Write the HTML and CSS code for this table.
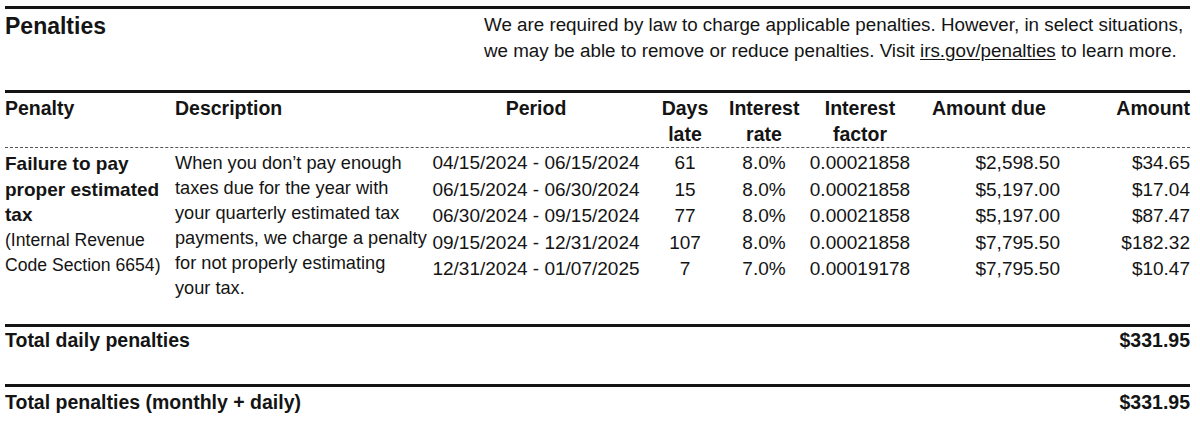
FILE: index.html
```html
<!DOCTYPE html>
<html lang="en">
<head>
<meta charset="utf-8">
<title>Penalties</title>
<link rel="stylesheet" href="styles.css">
</head>
<body>
<div class="page">
  <section class="intro">
    <h1 class="title">Penalties</h1>
    <p class="lead">We are required by law to charge applicable penalties. However, in select situations,<br>we may be able to remove or reduce penalties. Visit <a class="link" href="#">irs.gov/penalties</a> to learn more.</p>
  </section>

  <div class="thead">
    <div class="th c-pen">Penalty</div>
    <div class="th c-desc">Description</div>
    <div class="th c-per center">Period</div>
    <div class="th c-days center">Days<br>late</div>
    <div class="th c-rate center">Interest<br>rate</div>
    <div class="th c-fac center">Interest<br>factor</div>
    <div class="th c-due due-head">Amount due</div>
    <div class="th c-amt right">Amount</div>
  </div>

  <div class="tbody">
    <div class="pen-cell">
      <div class="pen-name">Failure to pay<br>proper estimated<br>tax</div>
      <div class="pen-code">(Internal Revenue<br>Code Section 6654)</div>
    </div>
    <div class="desc-cell">When you don’t pay enough<br>taxes due for the year with<br>your quarterly estimated tax<br>payments, we charge a penalty<br>for not properly estimating<br>your tax.</div>
    <div class="nums">
      <div class="td center">04/15/2024 - 06/15/2024</div><div class="td center">61</div><div class="td center">8.0%</div><div class="td center">0.00021858</div><div class="td right">$2,598.50</div><div class="td right">$34.65</div>
      <div class="td center">06/15/2024 - 06/30/2024</div><div class="td center">15</div><div class="td center">8.0%</div><div class="td center">0.00021858</div><div class="td right">$5,197.00</div><div class="td right">$17.04</div>
      <div class="td center">06/30/2024 - 09/15/2024</div><div class="td center">77</div><div class="td center">8.0%</div><div class="td center">0.00021858</div><div class="td right">$5,197.00</div><div class="td right">$87.47</div>
      <div class="td center">09/15/2024 - 12/31/2024</div><div class="td center">107</div><div class="td center">8.0%</div><div class="td center">0.00021858</div><div class="td right">$7,795.50</div><div class="td right">$182.32</div>
      <div class="td center">12/31/2024 - 01/07/2025</div><div class="td center">7</div><div class="td center">7.0%</div><div class="td center">0.00019178</div><div class="td right">$7,795.50</div><div class="td right">$10.47</div>
    </div>
  </div>

  <div class="total total-daily">
    <span>Total daily penalties</span>
    <span>$331.95</span>
  </div>
  <div class="total total-all">
    <span>Total penalties (monthly + daily)</span>
    <span>$331.95</span>
  </div>
</div>
</body>
</html>
```

FILE: styles.css
```css
html, body {
  margin: 0;
  padding: 0;
  background: #ffffff;
}

body {
  font-family: "Liberation Sans", Arial, sans-serif;
  color: #141414;
  font-size: 18.8px;
}

.page {
  width: 1185px;
  padding: 6px 0 0 5px;
}

.intro {
  display: flex;
  justify-content: space-between;
  align-items: flex-start;
  border-top: 3px solid #141414;
  padding: 3px 0 26px 0;
}

.title {
  margin: 1px 0 0 0;
  font-size: 23px;
  line-height: 26px;
  font-weight: bold;
}

.lead {
  margin: 0;
  width: 706px;
  font-size: 18.8px;
  line-height: 26px;
  white-space: nowrap;
}

.link {
  color: inherit;
  text-decoration: underline;
  text-underline-offset: 2px;
}

.thead {
  display: grid;
  grid-template-columns: 170px 256px 210px 88px 70px 122px 139px 130px;
  border-top: 3px solid #141414;
  border-bottom: 1.5px dashed #555;
  padding-top: 2px;
}

.th {
  font-weight: bold;
  font-size: 19.5px;
  line-height: 26px;
  white-space: nowrap;
}

.center { text-align: center; }
.right { text-align: right; }
.due-head { padding-left: 11px; }

.tbody {
  display: grid;
  grid-template-columns: 170px 256px 759px;
  padding-top: 3px;
}

.pen-cell {
  line-height: 25.5px;
  white-space: nowrap;
}

.pen-name {
  font-weight: bold;
  font-size: 19px;
}

.pen-code {
  font-size: 17.6px;
}

.desc-cell {
  font-size: 18.2px;
  line-height: 25px;
  white-space: nowrap;
}

.nums {
  display: grid;
  grid-template-columns: 210px 88px 70px 122px 139px 130px;
  grid-auto-rows: 26.5px;
  line-height: 26.5px;
  margin-top: -1px;
}

.td {
  font-size: 19px;
  white-space: nowrap;
}

.total {
  display: flex;
  justify-content: space-between;
  font-weight: bold;
  font-size: 19.5px;
  line-height: 26px;
  border-top: 3px solid #141414;
}

.total-daily {
  margin-top: 23px;
  padding-bottom: 31px;
}

.total-all {
  padding-top: 2px;
}
```
